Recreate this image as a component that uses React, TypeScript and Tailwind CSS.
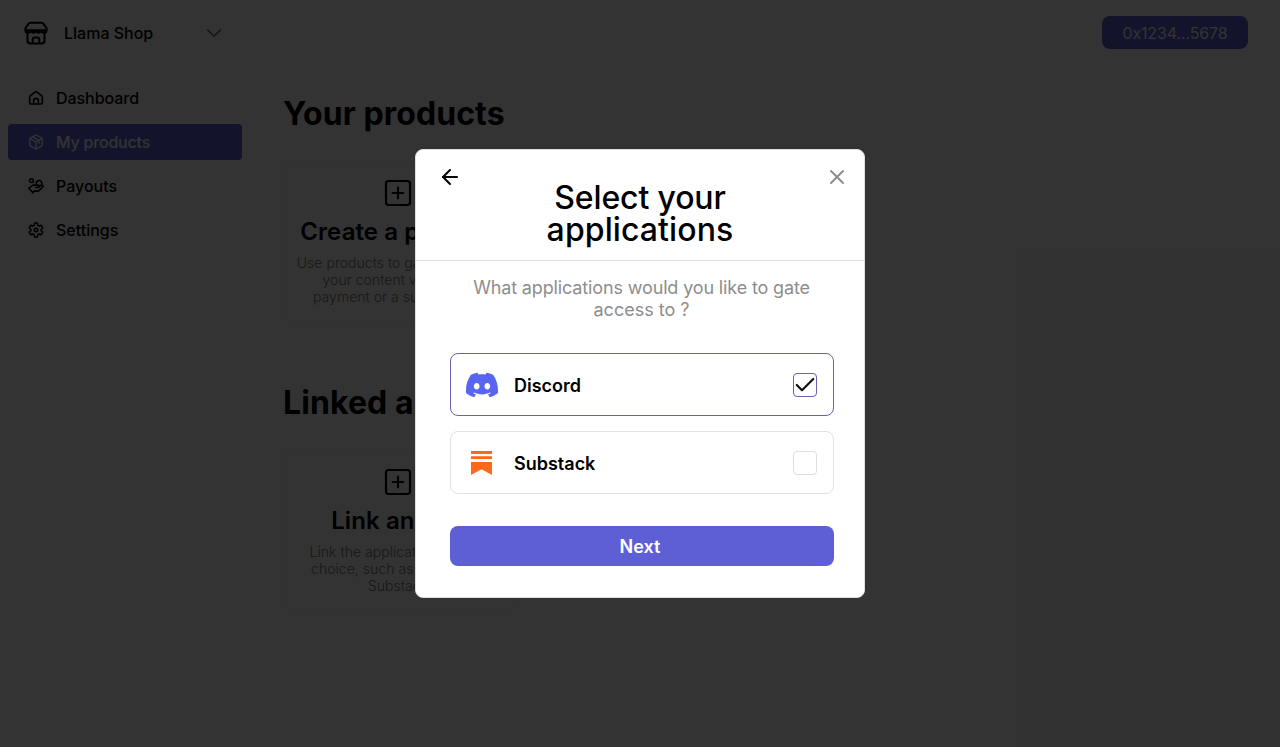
import React from "react";
import { ArrowLeft, X, SquarePlus } from "lucide-react";
import { SiDiscord } from "react-icons/si";

type IconProps = { className?: string };

const strokeProps = {
  viewBox: "0 0 24 24",
  fill: "none",
  stroke: "currentColor",
  strokeWidth: 2,
  strokeLinecap: "round" as const,
  strokeLinejoin: "round" as const,
};

function StoreIcon({ className }: IconProps) {
  return (
    <svg {...strokeProps} className={className}>
      <path d="M7 1.700h10a3 3 0 0 1 2.300 1L22.500 7v2.500h-21V7l3.200-4.300A3 3 0 0 1 7 1.700z" />
      <path d="M1.500 9.500c0 3 4.500 3 5.500.5c1 2.300 4 2.300 5 0c1 2.300 4 2.300 5 0c1 2.500 5.500 2.500 5.500-.5z" />
      <path d="M3.500 12v7.500a3 3 0 0 0 3 3h11a3 3 0 0 0 3-3V12" />
      <path d="M8.700 22v-3.500a2 2 0 0 1 2-2h2.600a2 2 0 0 1 2 2V22" />
    </svg>
  );
}

function HomeIcon({ className }: IconProps) {
  return (
    <svg {...strokeProps} strokeWidth={2.4} className={className}>
      <path d="M2.500 11a3 3 0 0 1 1.200-2.400l6.200-5a3.400 3.400 0 0 1 4.200 0l6.200 5a3 3 0 0 1 1.200 2.400V19a2 2 0 0 1-2 2h-15a2 2 0 0 1-2-2z" />
      <path d="M8.500 20.500V15a2 2 0 0 1 2-2h3a2 2 0 0 1 2 2v5.500" />
    </svg>
  );
}

function BoxIcon({ className }: IconProps) {
  return (
    <svg {...strokeProps} className={className}>
      <path d="M13.500 2.200l6.500 3.600a2.500 2.500 0 0 1 1.300 2.200v8a2.500 2.500 0 0 1-1.300 2.200l-6.500 3.600a3 3 0 0 1-3 0L4 18.200A2.500 2.500 0 0 1 2.700 16V8A2.500 2.500 0 0 1 4 5.800l6.500-3.600a3 3 0 0 1 3 0z" />
      <path d="M3.200 6.800l8.800 5.200l8.800-5.200M12 12v10.200M7.500 4.300l9 5.200V14" />
    </svg>
  );
}

function PayoutsIcon({ className }: IconProps) {
  return (
    <svg {...strokeProps} strokeWidth={2.300} className={className}>
      <circle cx="5.200" cy="4" r="2.900" />
      <path d="M12.500 8.800a4.200 4.200 0 0 1 7.300-3.600a4 4 0 0 1 .8 4.300" />
      <path d="M1.500 15.500l4-3.500c1.500-1.500 3-1.800 5-1.300h4.500a1.700 1.700 0 0 1 0 3.500H11" />
      <path d="M15.500 13.700l4.500-3a1.800 1.800 0 0 1 2.300 2.600L17 18.500c-1 1-2 1.200-3 1.200H9l-2 2" />
      <path d="M1.200 15.500l6.500 6.800" />
    </svg>
  );
}

function GearIcon({ className }: IconProps) {
  return (
    <svg {...strokeProps} strokeWidth={2.300} className={className}>
      <path d="M10 1.500h4l.8 3.400l2.100 1.200L20 5l2.200 3.700-2.400 2.300v2l2.400 2.300L20 19l-3.100-1.100l-2.100 1.200L14 22.500h-4l-.8-3.400l-2.100-1.200L4 19l-2.200-3.700L4.200 13v-2L1.800 8.700L4 5l3.100 1.100l2.100-1.200z" />
      <circle cx="12" cy="12" r="2.600" />
    </svg>
  );
}

const navItems = [
  { label: "Dashboard", Icon: HomeIcon, style: "text-black tracking-[-0.05px]" },
  { label: "My products", Icon: BoxIcon, style: "bg-[#5e5fd4] text-white tracking-[-0.2px]" },
  { label: "Payouts", Icon: PayoutsIcon, style: "text-black" },
  { label: "Settings", Icon: GearIcon, style: "text-black" },
];

function Sidebar() {
  return (
    <aside className="w-[250px] shrink-0 bg-[#fcfcfc]">
      <div className="flex h-[66px] items-center pl-6 pr-[26px]">
        <StoreIcon className="h-6 w-6" />
        <span className="ml-4 text-base font-medium">Llama Shop</span>
        <svg {...strokeProps} className="ml-auto h-5 w-5 text-neutral-500">
          <path d="M4.500 8.500L12 15.700l7.500-7.200" />
        </svg>
      </div>
      <nav className="mt-[14px] flex flex-col gap-2 px-2">
        {navItems.map(({ label, Icon, style }) => (
          <a key={label} className={`flex h-9 items-center gap-3 rounded px-5 text-base font-medium ${style}`}>
            <Icon className="h-4 w-4" />
            <span>{label}</span>
          </a>
        ))}
      </nav>
    </aside>
  );
}

function ActionCard({ title, lines }: { title: string; lines: string[] }) {
  return (
    <article className="flex h-[160px] w-[232px] flex-col items-center rounded-lg border border-[#f7f7f7] pr-[2px] pt-[15px]">
      <SquarePlus className="h-8 w-8" strokeWidth={1.6} />
      <h2 className="mt-[7px] whitespace-nowrap text-2xl font-semibold leading-8 tracking-[0.1px]">{title}</h2>
      <p className="mt-[6px] whitespace-nowrap text-center text-sm font-light leading-[17px] tracking-[0.03px] text-[#777]">
        {lines.map((line) => (
          <span className="block" key={line}>{line}</span>
        ))}
      </p>
    </article>
  );
}

function Option({ name, icon, checked }: { name: string; icon: React.ReactNode; checked: boolean }) {
  return (
    <label
      className={`flex h-[63px] items-center rounded-lg border px-[15px] ${
        checked ? "border-[#6960b5]" : "border-[#e1e1e3]"
      }`}
    >
      <span className="flex w-8 justify-center">{icon}</span>
      <span className="ml-4 pt-0.5 text-lg font-semibold">{name}</span>
      <span
        className={`ml-auto mr-px flex h-6 w-6 items-center justify-center rounded border ${
          checked ? "border-[#6960b5]" : "border-[#dedee0]"
        }`}
      >
        {checked && (
          <svg viewBox="0 0 20 16" className="h-4 w-5 shrink-0" fill="none" stroke="#111" strokeWidth="2.200" strokeLinecap="round" strokeLinejoin="round">
            <path d="M1.800 8l5.200 5.200L18.200 2" />
          </svg>
        )}
      </span>
    </label>
  );
}

function SubstackIcon() {
  return (
    <svg viewBox="0 0 21 24" className="mr-[2px] h-6 w-[21px]" fill="#ff6719">
      <path d="M0 0h21v3H0zM0 5.300h21v2.800H0zM0 11h21v13l-10.500-5.800L0 24z" />
    </svg>
  );
}

function Modal() {
  return (
    <div role="dialog" className="h-[449px] w-[450px] rounded-lg border border-[#dedede] bg-white">
      <header className="flex h-[111px] justify-between border-b border-[#dedede] px-[15px]">
        <ArrowLeft className="ml-[7px] mt-[15px] h-6 w-6" strokeWidth={2} />
        <h1 className="mr-[7px] mt-[32px] text-center text-[32px] font-medium leading-8">
          <span className="block tracking-[-0.15px]">Select your</span>
          <span className="block tracking-[0.1px]">applications</span>
        </h1>
        <X className="mt-[15px] h-6 w-6 text-[#8c8c8c]" strokeWidth={2} />
      </header>
      <p className="mt-4 pl-[3px] text-center text-lg leading-[22px] text-[#8d8d8d]">
        <span className="block tracking-[-0.14px]">What applications would you like to gate</span>
        <span className="block">access to ?</span>
      </p>
      <div className="ml-[34px] mt-8 flex w-[384px] flex-col gap-[15px]">
        <Option name="Discord" checked icon={<SiDiscord className="h-8 w-8 text-[#5865f2]" />} />
        <Option name="Substack" checked={false} icon={<SubstackIcon />} />
        <button className="mt-[17px] h-10 rounded-lg bg-[#5e5fd4] pr-1 pt-px text-lg font-semibold text-white">Next</button>
      </div>
    </div>
  );
}

export default function App() {
  return (
    <div className="relative h-[747px] w-full overflow-hidden bg-white font-['Inter',sans-serif] text-black">
      <div className="flex h-full">
        <Sidebar />
        <div className="flex-1">
          <header className="flex h-[65px] items-center justify-end pr-8">
            <button className="h-[33px] w-[146px] rounded-lg bg-[#5e5fd4] text-base tracking-[-0.15px] text-white">0x1234…5678</button>
          </header>
          <main className="h-[682px] bg-[#fcfcfc] pl-[33px] pt-[29px]">
            <h1 className="text-[32px] font-bold leading-10 tracking-[0.1px]">Your products</h1>
            <div className="mt-[27px]">
              <ActionCard title="Create a product" lines={["Use products to gate access to", "your content via crypto", "payment or a subscription"]} />
            </div>
            <h1 className="mt-[62px] text-[32px] font-bold leading-10 tracking-[0.1px]">Linked apps</h1>
            <div className="mt-[27px]">
              <ActionCard title="Link an app" lines={["Link the application of your", "choice, such as Discord or", "Substack"]} />
            </div>
          </main>
        </div>
      </div>
      <div className="absolute inset-0 flex items-center justify-center bg-black/80">
        <Modal />
      </div>
    </div>
  );
}
